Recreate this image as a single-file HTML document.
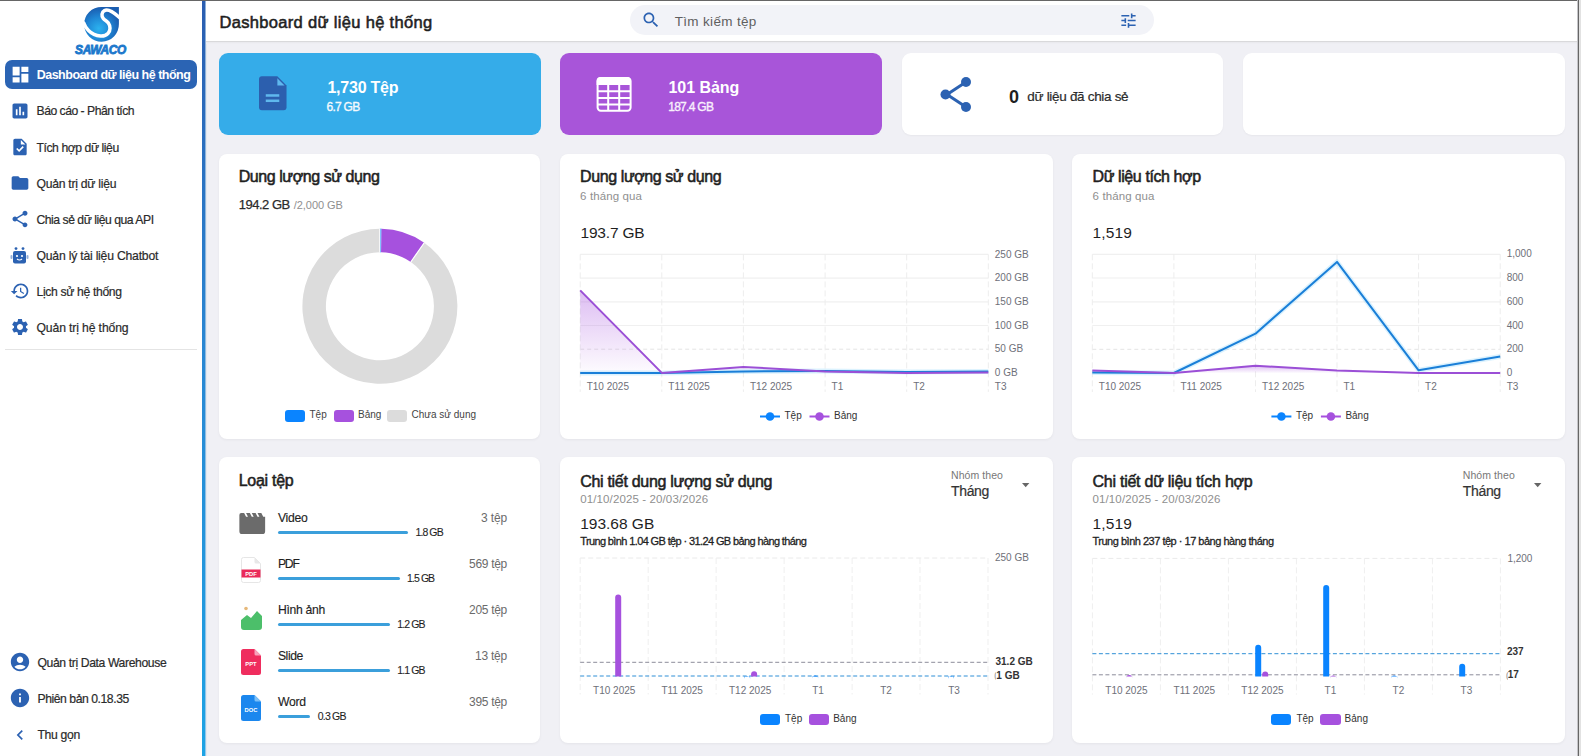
<!DOCTYPE html>
<html><head><meta charset="utf-8"><title>Dashboard</title>
<style>
html,body{margin:0;padding:0;}
body{width:1581px;height:756px;position:relative;overflow:hidden;background:#f0f0f5;font-family:"Liberation Sans",sans-serif;}
.a{position:absolute;}
.t{position:absolute;white-space:nowrap;line-height:1;font-family:"Liberation Sans",sans-serif;}
svg{position:absolute;overflow:visible;}
</style></head><body>
<div class="a" style="left:0;top:0;width:202px;height:756px;background:#fff"></div><div class="a" style="left:202px;top:0;width:3px;height:756px;background:linear-gradient(#2b5db0,#2a86d2 45%,#1ea3e4)"></div><div class="a" style="left:205px;top:0;width:1px;height:756px;background:linear-gradient(#8fb0d8,#8fc8ee)"></div><div class="a" style="left:206px;top:0;width:1px;height:756px;background:#e4e8ee"></div><div class="a" style="left:206px;top:0;width:1372px;height:41px;background:#fff"></div><div class="a" style="left:206px;top:41px;width:1372px;height:1px;background:#d9d9db"></div><div class="a" style="left:206px;top:42px;width:1372px;height:2px;background:linear-gradient(#e8e8ec,#f0f0f5)"></div><div class="a" style="left:0;top:0;width:1579px;height:1px;background:#666"></div><div class="a" style="left:1579px;top:0;width:2px;height:1px;background:#e8e8e8"></div><div class="a" style="left:1578px;top:0;width:1px;height:756px;background:#666"></div><div class="a" style="left:1577px;top:0;width:1px;height:756px;background:#c4c4c8"></div><div class="a" style="left:1579px;top:0;width:2px;height:756px;background:#e2e2e2"></div><svg style="left:83px;top:6px" width="38" height="37" viewBox="0 0 38 37">
<defs><radialGradient id="lg" cx="0.42" cy="0.62" r="0.6"><stop offset="0" stop-color="#2cb2ef"/><stop offset="0.55" stop-color="#1f86d4"/><stop offset="1" stop-color="#1a5db0"/></radialGradient></defs>
<path d="M18.5 0.9 H35.9 V18 A17.4 17.4 0 1 1 18.5 0.9 Z" fill="url(#lg)"/>
<path d="M37 12 C33 8.5 30.5 6.5 28.7 5.6 C26 4.2 23.5 3.6 21.5 4.6 C18.5 6.3 18.3 10 20.2 12.3 C21.8 14.2 24 15.3 25.5 17.2 C27.5 20 27.6 24.5 25.2 27.2 C23.2 29.3 20 30.2 17.5 30 C13 29.7 8.5 27.5 5.5 24.5 C3 22 1.6 19.5 0.8 17" fill="none" stroke="#fff" stroke-width="3.5" stroke-linecap="round"/>
</svg><div class="t" style="left:74.5px;top:43.6px;font-size:12px;font-weight:700;font-style:italic;color:#1c78cc;-webkit-text-stroke:0.8px #1c78cc;letter-spacing:-0.3px;transform:scale(0.99,1.02);transform-origin:0 0">SAWACO</div><div class="a" style="left:5px;top:60px;width:192px;height:29px;border-radius:7px;background:#2b64b4"></div><svg style="left:9.5px;top:64px" width="21" height="21" viewBox="0 0 24 24"><path d="M3 13h8V3H3v10zm0 8h8v-6H3v6zm10 0h8V11h-8v10zm0-18v6h8V3h-8z" fill="#fff"/></svg><svg style="left:10px;top:100.53px" width="20" height="20" viewBox="0 0 24 24"><path d="M19 3H5c-1.1 0-2 .9-2 2v14c0 1.1.9 2 2 2h14c1.1 0 2-.9 2-2V5c0-1.1-.9-2-2-2zM9 17H7v-7h2v7zm4 0h-2V7h2v10zm4 0h-2v-4h2v4z" fill="#2c62b2"/></svg><svg style="left:10px;top:136.66000000000003px" width="20" height="20" viewBox="0 0 24 24"><path d="M14 2H6c-1.1 0-1.99.9-1.99 2L4 20c0 1.1.89 2 1.99 2H18c1.1 0 2-.9 2-2V8l-6-6zm-3.06 16L7.4 14.46l1.41-1.41 2.12 2.12 4.24-4.24 1.41 1.41L10.94 18zM13 9V3.5L18.5 9H13z" fill="#2c62b2"/></svg><svg style="left:10px;top:172.79000000000002px" width="20" height="20" viewBox="0 0 24 24"><path d="M10 4H4c-1.1 0-1.99.9-1.99 2L2 18c0 1.1.9 2 2 2h16c1.1 0 2-.9 2-2V8c0-1.1-.9-2-2-2h-8l-2-2z" fill="#2c62b2"/></svg><svg style="left:10px;top:208.92000000000002px" width="20" height="20" viewBox="0 0 24 24"><path d="M18 16.08c-.76 0-1.44.3-1.96.77L8.91 12.7c.05-.23.09-.46.09-.7s-.04-.47-.09-.7l7.05-4.11c.54.5 1.25.81 2.04.81 1.66 0 3-1.34 3-3s-1.34-3-3-3-3 1.34-3 3c0 .24.04.47.09.7L8.040 9.81C7.5 9.31 6.79 9 6 9c-1.66 0-3 1.34-3 3s1.34 3 3 3c.79 0 1.5-.31 2.04-.81l7.12 4.16c-.05.21-.08.43-.08.65 0 1.61 1.31 2.920 2.92 2.92 1.61 0 2.92-1.31 2.92-2.92s-1.31-2.92-2.92-2.92z" fill="#2c62b2"/></svg><svg style="left:10px;top:281.18000000000006px" width="20" height="20" viewBox="0 0 24 24"><path d="M13 3c-4.97 0-9 4.03-9 9H1l3.89 3.89.07.14L9 12H6c0-3.87 3.13-7 7-7s7 3.13 7 7-3.13 7-7 7c-1.93 0-3.68-.79-4.94-2.06l-1.42 1.42C8.27 19.99 10.51 21 13 21c4.970 0 9-4.03 9-9s-4.03-9-9-9zm-1 5v5l4.28 2.54.72-1.21-3.5-2.08V8H12z" fill="#2c62b2"/></svg><svg style="left:10px;top:317.31000000000006px" width="20" height="20" viewBox="0 0 24 24"><path d="M19.14 12.94c.04-.3.06-.61.06-.94 0-.32-.02-.64-.07-.94l2.03-1.58c.18-.14.23-.41.12-.61l-1.92-3.32c-.12-.22-.37-.29-.59-.22l-2.39.96c-.5-.38-1.03-.7-1.62-.94l-.36-2.54c-.04-.24-.24-.41-.48-.41h-3.84c-.24 0-.43.17-.47.41l-.36 2.54c-.59.24-1.13.57-1.62.94l-2.39-.96c-.22-.08-.47 0-.59.22L2.74 8.87c-.12.21-.08.47.12.61l2.03 1.58c-.05.3-.09.63-.09.94s.02.64.07.94l-2.03 1.58c-.18.14-.23.41-.12.61l1.92 3.32c.12.22.37.29.59.22l2.39-.96c.5.38 1.03.7 1.62.94l.36 2.54c.05.24.24.41.48.41h3.84c.24 0 .44-.17.47-.41l.36-2.54c.59-.24 1.13-.56 1.62-.94l2.39.96c.22.08.47 0 .59-.22l1.92-3.32c.12-.22.07-.47-.12-.61l-2.01-1.58zM12 15.6c-1.98 0-3.6-1.62-3.6-3.6s1.62-3.6 3.6-3.6 3.6 1.62 3.6 3.6-1.62 3.6-3.6 3.6z" fill="#2c62b2"/></svg><svg style="left:10px;top:247px" width="19" height="17" viewBox="0 0 19 17">
<circle cx="6" cy="1.6" r="1.4" fill="#2c62b2"/><circle cx="13" cy="1.6" r="1.4" fill="#2c62b2"/>
<rect x="3" y="4" width="13" height="12.5" rx="2" fill="#2c62b2"/>
<rect x="0.5" y="8" width="2" height="4" rx="1" fill="#2c62b2" opacity="0.5"/><rect x="16.5" y="8" width="2" height="4" rx="1" fill="#2c62b2" opacity="0.5"/>
<circle cx="7" cy="9" r="1.1" fill="#fff"/><circle cx="12" cy="9" r="1.1" fill="#fff"/>
<path d="M7 12 Q9.5 14 12 12" stroke="#fff" stroke-width="1.1" fill="none"/>
</svg><div class="a" style="left:5px;top:349px;width:192px;height:1px;background:#e4e4e4"></div><svg style="left:9px;top:651px" width="22" height="22" viewBox="0 0 24 24"><path d="M12 2C6.48 2 2 6.48 2 12s4.48 10 10 10 10-4.48 10-10S17.52 2 12 2zm0 4c1.93 0 3.5 1.57 3.5 3.5S13.930 13 12 13s-3.5-1.57-3.5-3.5S10.07 6 12 6zm0 14c-2.03 0-4.43-.82-6.14-2.88C7.55 15.8 9.68 15 12 15s4.45.8 6.14 2.12C16.43 19.18 14.03 20 12 20z" fill="#2c62b2"/></svg><svg style="left:9px;top:687px" width="22" height="22" viewBox="0 0 24 24"><path d="M12 2C6.48 2 2 6.48 2 12s4.48 10 10 10 10-4.48 10-10S17.52 2 12 2zm1 15h-2v-6h2v6zm0-8h-2V7h2v2z" fill="#2c62b2"/></svg><svg style="left:10px;top:724.5px" width="20" height="20" viewBox="0 0 24 24"><path d="M15.41 7.41L14 6l-6 6 6 6 1.41-1.41L10.83 12z" fill="#2c62b2"/></svg><div class="a" style="left:630px;top:5px;width:524px;height:30px;border-radius:15px;background:#f2f3f8"></div><svg style="left:641px;top:9.5px" width="20" height="20" viewBox="0 0 24 24"><path d="M15.5 14h-.79l-.28-.27C15.41 12.59 16 11.11 16 9.5 16 5.91 13.09 3 9.5 3S3 5.91 3 9.5 5.91 16 9.5 16c1.61 0 3.09-.59 4.23-1.57l.27.28v.79l5 4.99L20.49 19l-4.99-5zm-6 0C7.01 14 5 11.99 5 9.5S7.01 5 9.5 5 14 7.01 14 9.5 11.99 14 9.5 14z" fill="#2c62b2"/></svg><svg style="left:1119px;top:10.5px" width="19" height="19" viewBox="0 0 24 24"><path d="M3 17v2h6v-2H3zM3 5v2h10V5H3zm10 16v-2h8v-2h-8v-2h-2v6h2zM7 9v2H3v2h4v2h2V9H7zm14 4v-2H11v2h10zm-6-4h2V7h4V5h-4V3h-2v6z" fill="#2c62b2"/></svg><div class="a" style="left:219px;top:53px;width:322px;height:82px;border-radius:9px;background:#35ace9"></div><div class="a" style="left:560px;top:53px;width:322px;height:82px;border-radius:9px;background:#a855d9"></div><div class="a" style="left:902px;top:53px;width:321px;height:82px;border-radius:9px;background:#fff;box-shadow:0 1px 2px rgba(0,0,0,0.04)"></div><div class="a" style="left:1243px;top:53px;width:322px;height:82px;border-radius:9px;background:#fff;box-shadow:0 1px 2px rgba(0,0,0,0.04)"></div><svg style="left:259px;top:76.3px" width="28" height="34.5" viewBox="0 0 29 35">
<path d="M3 0 H19 L28.5 9.5 V32 Q28.5 35 25.5 35 H3 Q0 35 0 32 V3 Q0 0 3 0 Z" fill="#2c5fae"/>
<path d="M19 2 L26.5 9.5 H19 Z" fill="#5fb8ee"/>
<rect x="7" y="18.5" width="14" height="2.6" fill="#5fb8ee"/><rect x="7" y="24" width="14" height="2.6" fill="#5fb8ee"/>
</svg><svg style="left:596px;top:77px" width="36" height="35" viewBox="0 0 36 35">
<rect x="1.6" y="0.9" width="33" height="32.8" rx="3.2" fill="none" stroke="#fff" stroke-width="2"/>
<path d="M0.6 4 Q0.6 0 4.6 0 H31 Q35 0 35 4 V8 H0.6 Z" fill="#fff"/>
<path d="M1 14.2H35M1 20.9H35M1 27.4H35M12.2 8V34M23.2 8V34" stroke="#fff" stroke-width="2"/>
</svg><svg style="left:939px;top:76px" width="34" height="37" viewBox="0 0 34 37">
<path d="M27 6 L8 18.5 L27 31" stroke="#2c62b2" stroke-width="3" fill="none"/>
<circle cx="27" cy="6" r="5" fill="#2c62b2"/><circle cx="6.5" cy="18.5" r="5" fill="#2c62b2"/><circle cx="27" cy="31" r="5" fill="#2c62b2"/>
</svg><div class="a" style="left:219px;top:154px;width:321px;height:285px;border-radius:8px;background:#fff;box-shadow:0 1px 3px rgba(0,0,0,0.05)"></div><div class="a" style="left:560px;top:154px;width:493px;height:285px;border-radius:8px;background:#fff;box-shadow:0 1px 3px rgba(0,0,0,0.05)"></div><div class="a" style="left:1072px;top:154px;width:493px;height:285px;border-radius:8px;background:#fff;box-shadow:0 1px 3px rgba(0,0,0,0.05)"></div><div class="a" style="left:219px;top:457px;width:321px;height:286px;border-radius:8px;background:#fff;box-shadow:0 1px 3px rgba(0,0,0,0.05)"></div><div class="a" style="left:560px;top:457px;width:493px;height:286px;border-radius:8px;background:#fff;box-shadow:0 1px 3px rgba(0,0,0,0.05)"></div><div class="a" style="left:1072px;top:457px;width:493px;height:286px;border-radius:8px;background:#fff;box-shadow:0 1px 3px rgba(0,0,0,0.05)"></div><svg style="left:0;top:0" width="1581" height="756"><path d="M379.90 228.80 A77.5 77.5 0 0 1 381.52 228.82 L381.03 252.31 A54 54 0 0 0 379.90 252.30 Z" fill="#0a84ff"/><path d="M381.52 228.82 A77.5 77.5 0 0 1 424.24 242.74 L410.80 262.01 A54 54 0 0 0 381.03 252.31 Z" fill="#a651de"/><path d="M424.24 242.74 A77.5 77.5 0 1 1 379.89 228.80 L379.89 252.30 A54 54 0 1 0 410.80 262.01 Z" fill="#dcdcdc"/><line x1="379.90" y1="252.30" x2="379.90" y2="228.80" stroke="#fff" stroke-width="1.2"/><line x1="410.80" y1="262.01" x2="424.24" y2="242.74" stroke="#fff" stroke-width="1.2"/></svg><div class="a" style="left:285px;top:410px;width:20px;height:11.5px;border-radius:3px;background:#0a84ff"></div><div class="a" style="left:333.5px;top:410px;width:20px;height:11.5px;border-radius:3px;background:#a651de"></div><div class="a" style="left:387px;top:410px;width:20px;height:11.5px;border-radius:3px;background:#dcdcdc"></div><svg style="left:0;top:0" width="1581" height="756"><line x1="580.2" y1="254.4" x2="988.3" y2="254.4" stroke="#f0f0f0" stroke-width="1.2"/><line x1="580.2" y1="278.1" x2="988.3" y2="278.1" stroke="#f0f0f0" stroke-width="1.2"/><line x1="580.2" y1="301.8" x2="988.3" y2="301.8" stroke="#f0f0f0" stroke-width="1.2"/><line x1="580.2" y1="325.5" x2="988.3" y2="325.5" stroke="#f0f0f0" stroke-width="1.2"/><line x1="580.2" y1="349.2" x2="988.3" y2="349.2" stroke="#e4e4e4" stroke-width="1" stroke-dasharray="4 3"/><line x1="580.2" y1="254.4" x2="580.2" y2="391.9" stroke="#ededed" stroke-width="1" stroke-dasharray="6 3"/><line x1="661.8" y1="254.4" x2="661.8" y2="391.9" stroke="#ededed" stroke-width="1" stroke-dasharray="6 3"/><line x1="743.4" y1="254.4" x2="743.4" y2="391.9" stroke="#ededed" stroke-width="1" stroke-dasharray="6 3"/><line x1="825.1" y1="254.4" x2="825.1" y2="391.9" stroke="#ededed" stroke-width="1" stroke-dasharray="6 3"/><line x1="906.7" y1="254.4" x2="906.7" y2="391.9" stroke="#ededed" stroke-width="1" stroke-dasharray="6 3"/><line x1="988.3" y1="254.4" x2="988.3" y2="391.9" stroke="#ededed" stroke-width="1" stroke-dasharray="6 3"/><defs><linearGradient id="gp580" x1="0" y1="0" x2="0" y2="1"><stop offset="0" stop-color="#a651de" stop-opacity="0.38"/><stop offset="1" stop-color="#a651de" stop-opacity="0.02"/></linearGradient><linearGradient id="gb580" x1="0" y1="0" x2="0" y2="1"><stop offset="0" stop-color="#1a87f0" stop-opacity="0.25"/><stop offset="1" stop-color="#1a87f0" stop-opacity="0.02"/></linearGradient></defs><polygon points="580.2,290.4 661.8,372.9 743.4,366.9 825.1,371.4 906.7,372.9 988.3,372.4 988.3,372.9 580.2,372.9" fill="url(#gp580)"/><polyline points="580.2,372.9 661.8,372.9 743.4,371.4 825.1,370.9 906.7,371.9 988.3,371.4" fill="none" stroke="#3ab8f8" stroke-opacity="0.18" stroke-width="5" stroke-linejoin="round"/><polyline points="580.2,372.9 661.8,372.9 743.4,371.4 825.1,370.9 906.7,371.9 988.3,371.4" fill="none" stroke="#1a7fd8" stroke-width="2" stroke-linejoin="round"/><polyline points="580.2,290.4 661.8,372.9 743.4,366.9 825.1,371.4 906.7,372.9 988.3,372.4" fill="none" stroke="#9b4fd6" stroke-width="2" stroke-linejoin="round"/></svg><svg style="left:0;top:0" width="1581" height="756"><line x1="760.0" y1="416.5" x2="780.0" y2="416.5" stroke="#0a84ff" stroke-width="2"/><circle cx="770.0" cy="416.5" r="4.3" fill="#0a84ff"/><line x1="809.5" y1="416.5" x2="829.5" y2="416.5" stroke="#a651de" stroke-width="2"/><circle cx="819.5" cy="416.5" r="4.3" fill="#a651de"/></svg><svg style="left:0;top:0" width="1581" height="756"><line x1="1092.3" y1="254.3" x2="1500.2" y2="254.3" stroke="#f0f0f0" stroke-width="1.2"/><line x1="1092.3" y1="278.0" x2="1500.2" y2="278.0" stroke="#f0f0f0" stroke-width="1.2"/><line x1="1092.3" y1="301.8" x2="1500.2" y2="301.8" stroke="#f0f0f0" stroke-width="1.2"/><line x1="1092.3" y1="325.5" x2="1500.2" y2="325.5" stroke="#f0f0f0" stroke-width="1.2"/><line x1="1092.3" y1="349.3" x2="1500.2" y2="349.3" stroke="#e4e4e4" stroke-width="1" stroke-dasharray="4 3"/><line x1="1092.3" y1="254.3" x2="1092.3" y2="392.0" stroke="#ededed" stroke-width="1" stroke-dasharray="6 3"/><line x1="1173.9" y1="254.3" x2="1173.9" y2="392.0" stroke="#ededed" stroke-width="1" stroke-dasharray="6 3"/><line x1="1255.5" y1="254.3" x2="1255.5" y2="392.0" stroke="#ededed" stroke-width="1" stroke-dasharray="6 3"/><line x1="1337.0" y1="254.3" x2="1337.0" y2="392.0" stroke="#ededed" stroke-width="1" stroke-dasharray="6 3"/><line x1="1418.6" y1="254.3" x2="1418.6" y2="392.0" stroke="#ededed" stroke-width="1" stroke-dasharray="6 3"/><line x1="1500.2" y1="254.3" x2="1500.2" y2="392.0" stroke="#ededed" stroke-width="1" stroke-dasharray="6 3"/><defs><linearGradient id="gp1092" x1="0" y1="0" x2="0" y2="1"><stop offset="0" stop-color="#a651de" stop-opacity="0.38"/><stop offset="1" stop-color="#a651de" stop-opacity="0.02"/></linearGradient><linearGradient id="gb1092" x1="0" y1="0" x2="0" y2="1"><stop offset="0" stop-color="#1a87f0" stop-opacity="0.25"/><stop offset="1" stop-color="#1a87f0" stop-opacity="0.02"/></linearGradient></defs><polygon points="1092.3,370.4 1173.9,373.0 1255.5,365.7 1337.0,370.6 1418.6,373.0 1500.2,373.0 1500.2,373.0 1092.3,373.0" fill="url(#gp1092)"/><polyline points="1092.3,372.4 1173.9,373.0 1255.5,333.7 1337.0,261.9 1418.6,370.3 1500.2,356.5" fill="none" stroke="#3ab8f8" stroke-opacity="0.18" stroke-width="5" stroke-linejoin="round"/><polyline points="1092.3,372.4 1173.9,373.0 1255.5,333.7 1337.0,261.9 1418.6,370.3 1500.2,356.5" fill="none" stroke="#1a7fd8" stroke-width="2" stroke-linejoin="round"/><polyline points="1092.3,370.4 1173.9,373.0 1255.5,365.7 1337.0,370.6 1418.6,373.0 1500.2,373.0" fill="none" stroke="#9b4fd6" stroke-width="2" stroke-linejoin="round"/></svg><svg style="left:0;top:0" width="1581" height="756"><line x1="1271.4" y1="416.5" x2="1291.4" y2="416.5" stroke="#0a84ff" stroke-width="2"/><circle cx="1281.4" cy="416.5" r="4.3" fill="#0a84ff"/><line x1="1320.9" y1="416.5" x2="1340.9" y2="416.5" stroke="#a651de" stroke-width="2"/><circle cx="1330.9" cy="416.5" r="4.3" fill="#a651de"/></svg><div class="a" style="left:278px;top:530.9px;width:130.0px;height:3px;border-radius:1.5px;background:#3b9fdb"></div><div class="a" style="left:278px;top:576.9px;width:121.6px;height:3px;border-radius:1.5px;background:#3b9fdb"></div><div class="a" style="left:278px;top:622.9px;width:111.8px;height:3px;border-radius:1.5px;background:#3b9fdb"></div><div class="a" style="left:278px;top:668.9px;width:111.8px;height:3px;border-radius:1.5px;background:#3b9fdb"></div><div class="a" style="left:278px;top:714.9px;width:32.2px;height:3px;border-radius:1.5px;background:#3b9fdb"></div><svg style="left:239px;top:513px" width="26.5" height="21" viewBox="0 0 27 22">
<path d="M2 0 L5 0 L7 4 L9 4 L7 0 L11 0 L13 4 L15 4 L13 0 L17 0 L19 4 L21 4 L19 0 L23 0 L25 4 L27 4 L27 19 Q27 22 24 22 L3 22 Q0 22 0 19 L0 2 Q0 0 2 0 Z" fill="#6b6b6b"/>
</svg><svg style="left:241px;top:557px" width="20" height="26" viewBox="0 0 20 26">
<path d="M2.5 0.5 H13.5 L19.5 6.5 V23.5 Q19.5 25.5 17.5 25.5 H2.5 Q0.5 25.5 0.5 23.5 V2.5 Q0.5 0.5 2.5 0.5 Z" fill="#fff" stroke="#e6e6e6" stroke-width="1"/>
<path d="M13.5 0.5 L19.5 6.5 H15 Q13.5 6.5 13.5 5 Z" fill="#e8e8e8"/>
<rect x="0.5" y="12.5" width="19" height="8" fill="#ea2a5a"/>
<text x="10" y="18.8" text-anchor="middle" font-family="Liberation Sans" font-weight="700" font-size="5.8" fill="#fff">PDF</text>
</svg><svg style="left:241px;top:606px" width="21" height="24" viewBox="0 0 21 24">
<circle cx="5" cy="2.5" r="1.8" fill="#e6b87a"/>
<path d="M0 14 L6 9 L10 12 L16 5 L21 10 V21 Q21 24 18 24 H3 Q0 24 0 21 Z" fill="#4cbf6a"/>
</svg><svg style="left:241px;top:649px" width="20" height="26" viewBox="0 0 20 26">
<path d="M2.5 0 H13.5 L20 6.5 V23.5 Q20 26 17.5 26 H2.5 Q0 26 0 23.5 V2.5 Q0 0 2.5 0 Z" fill="#ef2d5e"/>
<path d="M13.5 0 L20 6.5 H15 Q13.5 6.5 13.5 5 Z" fill="#f7a3bb"/>
<text x="10" y="17" text-anchor="middle" font-family="Liberation Sans" font-weight="700" font-size="5.8" fill="#fff">PPT</text>
</svg><svg style="left:241px;top:695px" width="20" height="26" viewBox="0 0 20 26">
<path d="M2.5 0 H13.5 L20 6.5 V23.5 Q20 26 17.5 26 H2.5 Q0 26 0 23.5 V2.5 Q0 0 2.5 0 Z" fill="#1b87ee"/>
<path d="M13.5 0 L20 6.5 H15 Q13.5 6.5 13.5 5 Z" fill="#7cc0f7"/>
<text x="10" y="17" text-anchor="middle" font-family="Liberation Sans" font-weight="700" font-size="5.8" fill="#fff">DOC</text>
</svg><svg style="left:1022.3px;top:482.8px" width="7.4" height="4.2" viewBox="0 0 10 5" preserveAspectRatio="none"><path d="M0 0 H10 L5 5 Z" fill="#666"/></svg><svg style="left:0;top:0" width="1581" height="756"><line x1="580.2" y1="558.0" x2="988.0" y2="558.0" stroke="#eaeaea" stroke-width="1" stroke-dasharray="5 3"/><line x1="580.2" y1="558.0" x2="580.2" y2="694.5" stroke="#efefef" stroke-width="1" stroke-dasharray="6 3"/><line x1="648.2" y1="558.0" x2="648.2" y2="694.5" stroke="#efefef" stroke-width="1" stroke-dasharray="6 3"/><line x1="716.1" y1="558.0" x2="716.1" y2="694.5" stroke="#efefef" stroke-width="1" stroke-dasharray="6 3"/><line x1="784.1" y1="558.0" x2="784.1" y2="694.5" stroke="#efefef" stroke-width="1" stroke-dasharray="6 3"/><line x1="852.1" y1="558.0" x2="852.1" y2="694.5" stroke="#efefef" stroke-width="1" stroke-dasharray="6 3"/><line x1="920.0" y1="558.0" x2="920.0" y2="694.5" stroke="#efefef" stroke-width="1" stroke-dasharray="6 3"/><line x1="988.0" y1="558.0" x2="988.0" y2="694.5" stroke="#efefef" stroke-width="1" stroke-dasharray="6 3"/><line x1="580.2" y1="662.3" x2="988.0" y2="662.3" stroke="#8c8c9a" stroke-width="1" stroke-dasharray="4 2.5"/><line x1="580.2" y1="676.0" x2="988.0" y2="676.0" stroke="#2f8fd6" stroke-width="1" stroke-dasharray="4 2.5"/><path d="M615.2 676.5 V597.5 Q615.2 594.5 618.2 594.5 Q621.2 594.5 621.2 597.5 V676.5 Z" fill="#a651de"/><path d="M744.1 676.5 V678.9 Q744.1 675.9 747.1 675.9 Q750.1 675.9 750.1 678.9 V676.5 Z" fill="#0a84ff"/><path d="M751.1 676.5 V674.2 Q751.1 671.2 754.1 671.2 Q757.1 671.2 757.1 674.2 V676.5 Z" fill="#a651de"/><path d="M812.1 676.5 V678.5 Q812.1 675.5 815.1 675.5 Q818.1 675.5 818.1 678.5 V676.5 Z" fill="#0a84ff"/><path d="M948.0 676.5 V679.0 Q948.0 676.0 951.0 676.0 Q954.0 676.0 954.0 679.0 V676.5 Z" fill="#0a84ff"/></svg><div class="a" style="left:760px;top:714.3px;width:20px;height:11px;border-radius:3px;background:#0a84ff"></div><div class="a" style="left:808.6px;top:714.3px;width:20.6px;height:11px;border-radius:3px;background:#a651de"></div><div class="t" style="left:994.3px;top:671.5px;font-size:10px;color:#999">0</div><div class="a" style="left:996px;top:670px;width:22px;height:10px;background:#fff"></div><svg style="left:1534.1px;top:482.8px" width="7.4" height="4.2" viewBox="0 0 10 5" preserveAspectRatio="none"><path d="M0 0 H10 L5 5 Z" fill="#666"/></svg><svg style="left:0;top:0" width="1581" height="756"><line x1="1092.4" y1="558.4" x2="1500.4" y2="558.4" stroke="#eaeaea" stroke-width="1" stroke-dasharray="5 3"/><line x1="1092.4" y1="558.4" x2="1092.4" y2="694.6" stroke="#efefef" stroke-width="1" stroke-dasharray="6 3"/><line x1="1160.4" y1="558.4" x2="1160.4" y2="694.6" stroke="#efefef" stroke-width="1" stroke-dasharray="6 3"/><line x1="1228.4" y1="558.4" x2="1228.4" y2="694.6" stroke="#efefef" stroke-width="1" stroke-dasharray="6 3"/><line x1="1296.4" y1="558.4" x2="1296.4" y2="694.6" stroke="#efefef" stroke-width="1" stroke-dasharray="6 3"/><line x1="1364.4" y1="558.4" x2="1364.4" y2="694.6" stroke="#efefef" stroke-width="1" stroke-dasharray="6 3"/><line x1="1432.4" y1="558.4" x2="1432.4" y2="694.6" stroke="#efefef" stroke-width="1" stroke-dasharray="6 3"/><line x1="1500.4" y1="558.4" x2="1500.4" y2="694.6" stroke="#efefef" stroke-width="1" stroke-dasharray="6 3"/><line x1="1092.4" y1="653.7" x2="1500.4" y2="653.7" stroke="#2f8fd6" stroke-width="1" stroke-dasharray="4 2.5"/><line x1="1092.4" y1="674.8" x2="1500.4" y2="674.8" stroke="#8c8c9a" stroke-width="1" stroke-dasharray="4 2.5"/><path d="M1126.2 676.6 V678.1 Q1126.2 675.1 1129.2 675.1 Q1132.2 675.1 1132.2 678.1 V676.6 Z" fill="#a651de"/><path d="M1255.2 676.6 V647.8 Q1255.2 644.8 1258.2 644.8 Q1261.2 644.8 1261.2 647.8 V676.6 Z" fill="#0a84ff"/><path d="M1262.2 676.6 V674.6 Q1262.2 671.6 1265.2 671.6 Q1268.2 671.6 1268.2 674.6 V676.6 Z" fill="#a651de"/><path d="M1323.2 676.6 V587.9 Q1323.2 584.9 1326.2 584.9 Q1329.2 584.9 1329.2 587.9 V676.6 Z" fill="#0a84ff"/><path d="M1330.2 676.6 V678.4 Q1330.2 675.4 1333.2 675.4 Q1336.2 675.4 1336.2 678.4 V676.6 Z" fill="#a651de"/><path d="M1391.2 676.6 V678.4 Q1391.2 675.4 1394.2 675.4 Q1397.2 675.4 1397.2 678.4 V676.6 Z" fill="#0a84ff"/><path d="M1459.2 676.6 V666.8 Q1459.2 663.8 1462.2 663.8 Q1465.2 663.8 1465.2 666.8 V676.6 Z" fill="#0a84ff"/></svg><div class="a" style="left:1271.4px;top:714.3px;width:20px;height:11px;border-radius:3px;background:#0a84ff"></div><div class="a" style="left:1320.0px;top:714.3px;width:20.6px;height:11px;border-radius:3px;background:#a651de"></div><div class="t" style="left:1506px;top:671.8px;font-size:10px;color:#999">0</div><div class="a" style="left:1508px;top:669.5px;width:14px;height:10px;background:#fff"></div>
<div class="t" style="top:68.8px;font-size:12.5px;font-weight:700;color:#fff;letter-spacing:-0.50px;left:36.7px;">Dashboard dữ liệu hệ thống</div><div class="t" style="top:105.4px;font-size:12.2px;color:#2b2b2b;letter-spacing:-0.50px;left:36.5px;-webkit-text-stroke:0.2px #2b2b2b;">Báo cáo - Phân tích</div><div class="t" style="top:141.5px;font-size:12.2px;color:#2b2b2b;letter-spacing:-0.44px;left:36.5px;-webkit-text-stroke:0.2px #2b2b2b;">Tích hợp dữ liệu</div><div class="t" style="top:177.7px;font-size:12.2px;color:#2b2b2b;letter-spacing:-0.27px;left:36.5px;-webkit-text-stroke:0.2px #2b2b2b;">Quản trị dữ liệu</div><div class="t" style="top:213.8px;font-size:12.2px;color:#2b2b2b;letter-spacing:-0.48px;left:36.5px;-webkit-text-stroke:0.2px #2b2b2b;">Chia sẻ dữ liệu qua API</div><div class="t" style="top:249.9px;font-size:12.2px;color:#2b2b2b;letter-spacing:-0.21px;left:36.5px;-webkit-text-stroke:0.2px #2b2b2b;">Quản lý tài liệu Chatbot</div><div class="t" style="top:286.1px;font-size:12.2px;color:#2b2b2b;letter-spacing:-0.35px;left:36.5px;-webkit-text-stroke:0.2px #2b2b2b;">Lịch sử hệ thống</div><div class="t" style="top:322.2px;font-size:12.2px;color:#2b2b2b;letter-spacing:-0.13px;left:36.5px;-webkit-text-stroke:0.2px #2b2b2b;">Quản trị hệ thống</div><div class="t" style="top:656.9px;font-size:12.2px;color:#2b2b2b;letter-spacing:-0.39px;left:37.5px;-webkit-text-stroke:0.2px #2b2b2b;">Quản trị Data Warehouse</div><div class="t" style="top:693.1px;font-size:12.2px;color:#2b2b2b;letter-spacing:-0.45px;left:37.5px;-webkit-text-stroke:0.2px #2b2b2b;">Phiên bản 0.18.35</div><div class="t" style="top:728.9px;font-size:12.2px;color:#2b2b2b;letter-spacing:-0.32px;left:37.5px;-webkit-text-stroke:0.2px #2b2b2b;">Thu gọn</div><div class="t" style="top:13.5px;font-size:16.5px;color:#1f1f1f;letter-spacing:0.32px;left:219.5px;-webkit-text-stroke:0.55px #1f1f1f;">Dashboard dữ liệu hệ thống</div><div class="t" style="top:14.6px;font-size:13.5px;color:#5f5f5f;letter-spacing:0.33px;left:674.7px;">Tìm kiếm tệp</div><div class="t" style="top:80.0px;font-size:16px;font-weight:700;color:#fff;letter-spacing:-0.22px;left:327.4px;">1,730 Tệp</div><div class="t" style="top:100.5px;font-size:12px;color:#f4f9fd;letter-spacing:-0.73px;left:326.5px;-webkit-text-stroke:0.35px #f4f9fd;">6.7 GB</div><div class="t" style="top:80.3px;font-size:16px;font-weight:700;color:#fff;letter-spacing:-0.02px;left:668.4px;">101 Bảng</div><div class="t" style="top:100.9px;font-size:12px;color:#f8f0fc;letter-spacing:-0.71px;left:668.2px;-webkit-text-stroke:0.35px #f8f0fc;">187.4 GB</div><div class="t" style="top:87.5px;font-size:18px;font-weight:700;color:#1f1f1f;left:1009.1px;">0</div><div class="t" style="top:90.2px;font-size:13.5px;color:#2b2b2b;letter-spacing:-0.31px;left:1027.3px;-webkit-text-stroke:0.2px #2b2b2b;">dữ liệu đã chia sẻ</div><div class="t" style="top:168.7px;font-size:16px;color:#1f1f1f;letter-spacing:-0.43px;left:238.7px;-webkit-text-stroke:0.55px #1f1f1f;">Dung lượng sử dụng</div><div class="t" style="top:197.8px;font-size:13px;color:#2b2b2b;letter-spacing:-0.49px;left:238.7px;-webkit-text-stroke:0.25px #2b2b2b;">194.2 GB</div><div class="t" style="top:199.5px;font-size:11px;color:#8f8f8f;letter-spacing:-0.06px;left:293.8px;">/2,000 GB</div><div class="t" style="top:410.3px;font-size:10px;color:#444;left:309.5px;">Tệp</div><div class="t" style="top:410.3px;font-size:10px;color:#444;left:358.0px;">Bảng</div><div class="t" style="top:410.3px;font-size:10px;color:#444;left:411.5px;">Chưa sử dụng</div><div class="t" style="top:168.7px;font-size:16px;color:#1f1f1f;letter-spacing:-0.41px;left:580.1px;-webkit-text-stroke:0.55px #1f1f1f;">Dung lượng sử dụng</div><div class="t" style="top:190.5px;font-size:11.5px;color:#8f8f8f;letter-spacing:0.11px;left:580.1px;">6 tháng qua</div><div class="t" style="top:225.0px;font-size:15.5px;color:#1f1f1f;letter-spacing:-0.19px;left:580.5px;">193.7 GB</div><div class="t" style="top:368.0px;font-size:10px;color:#6e7079;left:994.8px;">0 GB</div><div class="t" style="top:344.3px;font-size:10px;color:#6e7079;left:994.8px;">50 GB</div><div class="t" style="top:320.6px;font-size:10px;color:#6e7079;left:994.8px;">100 GB</div><div class="t" style="top:296.9px;font-size:10px;color:#6e7079;left:994.8px;">150 GB</div><div class="t" style="top:273.2px;font-size:10px;color:#6e7079;left:994.8px;">200 GB</div><div class="t" style="top:249.5px;font-size:10px;color:#6e7079;left:994.8px;">250 GB</div><div class="t" style="top:381.9px;font-size:10px;color:#6e7079;left:586.7px;">T10 2025</div><div class="t" style="top:381.9px;font-size:10px;color:#6e7079;left:668.3px;">T11 2025</div><div class="t" style="top:381.9px;font-size:10px;color:#6e7079;left:749.9px;">T12 2025</div><div class="t" style="top:381.9px;font-size:10px;color:#6e7079;left:831.6px;">T1</div><div class="t" style="top:381.9px;font-size:10px;color:#6e7079;left:913.2px;">T2</div><div class="t" style="top:381.9px;font-size:10px;color:#6e7079;left:994.8px;">T3</div><div class="t" style="top:411.3px;font-size:10px;color:#333;left:784.5px;">Tệp</div><div class="t" style="top:411.3px;font-size:10px;color:#333;left:834.0px;">Bảng</div><div class="t" style="top:168.7px;font-size:16px;color:#1f1f1f;letter-spacing:-0.41px;left:1092.6px;-webkit-text-stroke:0.55px #1f1f1f;">Dữ liệu tích hợp</div><div class="t" style="top:190.5px;font-size:11.5px;color:#8f8f8f;letter-spacing:0.11px;left:1092.6px;">6 tháng qua</div><div class="t" style="top:225.0px;font-size:15.5px;color:#1f1f1f;letter-spacing:0.12px;left:1092.6px;">1,519</div><div class="t" style="top:368.1px;font-size:10px;color:#6e7079;left:1506.7px;">0</div><div class="t" style="top:344.4px;font-size:10px;color:#6e7079;left:1506.7px;">200</div><div class="t" style="top:320.7px;font-size:10px;color:#6e7079;left:1506.7px;">400</div><div class="t" style="top:296.9px;font-size:10px;color:#6e7079;left:1506.7px;">600</div><div class="t" style="top:273.2px;font-size:10px;color:#6e7079;left:1506.7px;">800</div><div class="t" style="top:249.4px;font-size:10px;color:#6e7079;left:1506.7px;">1,000</div><div class="t" style="top:382.0px;font-size:10px;color:#6e7079;left:1098.8px;">T10 2025</div><div class="t" style="top:382.0px;font-size:10px;color:#6e7079;left:1180.4px;">T11 2025</div><div class="t" style="top:382.0px;font-size:10px;color:#6e7079;left:1262.0px;">T12 2025</div><div class="t" style="top:382.0px;font-size:10px;color:#6e7079;left:1343.5px;">T1</div><div class="t" style="top:382.0px;font-size:10px;color:#6e7079;left:1425.1px;">T2</div><div class="t" style="top:382.0px;font-size:10px;color:#6e7079;left:1506.7px;">T3</div><div class="t" style="top:411.3px;font-size:10px;color:#333;left:1295.9px;">Tệp</div><div class="t" style="top:411.3px;font-size:10px;color:#333;left:1345.4px;">Bảng</div><div class="t" style="top:473.2px;font-size:16px;color:#1f1f1f;letter-spacing:-0.28px;left:238.7px;-webkit-text-stroke:0.55px #1f1f1f;">Loại tệp</div><div class="t" style="top:512.0px;font-size:12.2px;color:#1f1f1f;letter-spacing:-0.27px;left:277.9px;-webkit-text-stroke:0.15px #1f1f1f;">Video</div><div class="t" style="top:526.7px;font-size:10.5px;color:#1f1f1f;letter-spacing:-0.91px;left:415.5px;-webkit-text-stroke:0.1px #1f1f1f;">1.8 GB</div><div class="t" style="top:512.4px;font-size:12px;color:#6b6b6b;letter-spacing:-0.14px;left:481.0px;">3 tệp</div><div class="t" style="top:558.0px;font-size:12.2px;color:#1f1f1f;letter-spacing:-1.16px;left:277.9px;-webkit-text-stroke:0.15px #1f1f1f;">PDF</div><div class="t" style="top:572.7px;font-size:10.5px;color:#1f1f1f;letter-spacing:-0.93px;left:407.1px;-webkit-text-stroke:0.1px #1f1f1f;">1.5 GB</div><div class="t" style="top:558.4px;font-size:12px;color:#6b6b6b;letter-spacing:-0.29px;left:469.0px;">569 tệp</div><div class="t" style="top:604.0px;font-size:12.2px;color:#1f1f1f;letter-spacing:-0.31px;left:277.9px;-webkit-text-stroke:0.15px #1f1f1f;">Hình ảnh</div><div class="t" style="top:618.7px;font-size:10.5px;color:#1f1f1f;letter-spacing:-0.91px;left:397.3px;-webkit-text-stroke:0.1px #1f1f1f;">1.2 GB</div><div class="t" style="top:604.4px;font-size:12px;color:#6b6b6b;letter-spacing:-0.29px;left:469.0px;">205 tệp</div><div class="t" style="top:650.0px;font-size:12.2px;color:#1f1f1f;letter-spacing:-0.42px;left:277.9px;-webkit-text-stroke:0.15px #1f1f1f;">Slide</div><div class="t" style="top:664.7px;font-size:10.5px;color:#1f1f1f;letter-spacing:-0.91px;left:397.3px;-webkit-text-stroke:0.1px #1f1f1f;">1.1 GB</div><div class="t" style="top:650.4px;font-size:12px;color:#6b6b6b;letter-spacing:-0.23px;left:475.0px;">13 tệp</div><div class="t" style="top:696.0px;font-size:12.2px;color:#1f1f1f;letter-spacing:-0.23px;left:277.9px;-webkit-text-stroke:0.15px #1f1f1f;">Word</div><div class="t" style="top:710.7px;font-size:10.5px;color:#1f1f1f;letter-spacing:-0.78px;left:317.7px;-webkit-text-stroke:0.1px #1f1f1f;">0.3 GB</div><div class="t" style="top:696.4px;font-size:12px;color:#6b6b6b;letter-spacing:-0.29px;left:469.0px;">395 tệp</div><div class="t" style="top:473.5px;font-size:16px;color:#1f1f1f;letter-spacing:-0.30px;left:580.2px;-webkit-text-stroke:0.55px #1f1f1f;">Chi tiết dung lượng sử dụng</div><div class="t" style="top:494.4px;font-size:11.5px;color:#8f8f8f;letter-spacing:0.12px;left:580.2px;">01/10/2025 - 20/03/2026</div><div class="t" style="top:516.4px;font-size:15.5px;color:#1f1f1f;letter-spacing:-0.01px;left:580.2px;">193.68 GB</div><div class="t" style="top:535.7px;font-size:11px;color:#1f1f1f;letter-spacing:-0.62px;left:580.2px;-webkit-text-stroke:0.3px #1f1f1f;">Trung bình 1.04 GB tệp · 31.24 GB bảng hàng tháng</div><div class="t" style="top:469.7px;font-size:10.5px;color:#777;letter-spacing:0.07px;left:951.0px;">Nhóm theo</div><div class="t" style="top:484.3px;font-size:14px;color:#333;letter-spacing:-0.34px;left:951.0px;-webkit-text-stroke:0.2px #333;">Tháng</div><div class="t" style="top:553.1px;font-size:10px;color:#6e7079;left:995.0px;">250 GB</div><div class="t" style="top:685.5px;font-size:10px;color:#6e7079;left:593.1px;">T10 2025</div><div class="t" style="top:685.5px;font-size:10px;color:#6e7079;left:661.4px;">T11 2025</div><div class="t" style="top:685.5px;font-size:10px;color:#6e7079;left:729.0px;">T12 2025</div><div class="t" style="top:685.5px;font-size:10px;color:#6e7079;left:812.2px;">T1</div><div class="t" style="top:685.5px;font-size:10px;color:#6e7079;left:880.2px;">T2</div><div class="t" style="top:685.5px;font-size:10px;color:#6e7079;left:948.2px;">T3</div><div class="t" style="top:714.3px;font-size:10px;color:#333;left:785.0px;">Tệp</div><div class="t" style="top:714.3px;font-size:10px;color:#333;left:833.2px;">Bảng</div><div class="t" style="top:656.7px;font-size:10px;font-weight:700;color:#333;left:995.5px;">31.2 GB</div><div class="t" style="top:670.5px;font-size:10px;font-weight:700;color:#333;left:996.3px;">1 GB</div><div class="t" style="top:473.5px;font-size:16px;color:#1f1f1f;letter-spacing:-0.25px;left:1092.5px;-webkit-text-stroke:0.55px #1f1f1f;">Chi tiết dữ liệu tích hợp</div><div class="t" style="top:494.4px;font-size:11.5px;color:#8f8f8f;letter-spacing:0.12px;left:1092.5px;">01/10/2025 - 20/03/2026</div><div class="t" style="top:516.4px;font-size:15.5px;color:#1f1f1f;letter-spacing:0.12px;left:1092.5px;">1,519</div><div class="t" style="top:535.7px;font-size:11px;color:#1f1f1f;letter-spacing:-0.49px;left:1092.5px;-webkit-text-stroke:0.3px #1f1f1f;">Trung bình 237 tệp · 17 bảng hàng tháng</div><div class="t" style="top:469.7px;font-size:10.5px;color:#777;letter-spacing:0.07px;left:1462.8px;">Nhóm theo</div><div class="t" style="top:484.3px;font-size:14px;color:#333;letter-spacing:-0.34px;left:1462.8px;-webkit-text-stroke:0.2px #333;">Tháng</div><div class="t" style="top:553.5px;font-size:10px;color:#6e7079;left:1507.4px;">1,200</div><div class="t" style="top:685.6px;font-size:10px;color:#6e7079;left:1105.3px;">T10 2025</div><div class="t" style="top:685.6px;font-size:10px;color:#6e7079;left:1173.6px;">T11 2025</div><div class="t" style="top:685.6px;font-size:10px;color:#6e7079;left:1241.3px;">T12 2025</div><div class="t" style="top:685.6px;font-size:10px;color:#6e7079;left:1324.6px;">T1</div><div class="t" style="top:685.6px;font-size:10px;color:#6e7079;left:1392.6px;">T2</div><div class="t" style="top:685.6px;font-size:10px;color:#6e7079;left:1460.6px;">T3</div><div class="t" style="top:714.3px;font-size:10px;color:#333;left:1296.4px;">Tệp</div><div class="t" style="top:714.3px;font-size:10px;color:#333;left:1344.6px;">Bảng</div><div class="t" style="top:647.3px;font-size:10px;font-weight:700;color:#333;left:1507.0px;">237</div><div class="t" style="top:669.7px;font-size:10px;font-weight:700;color:#333;left:1507.8px;">17</div>
</body></html>
